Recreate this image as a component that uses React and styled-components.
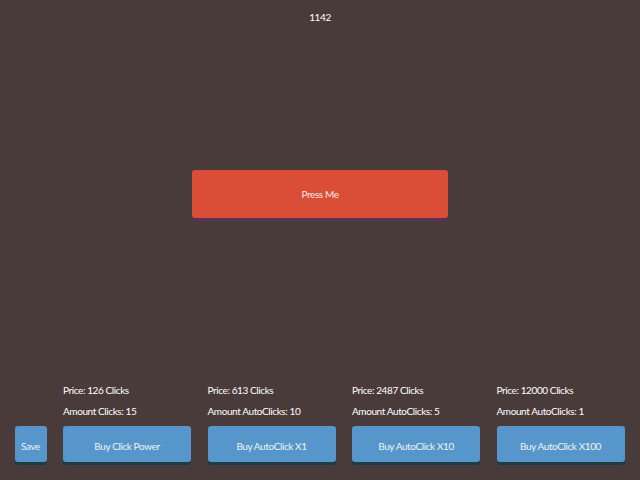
import React from "react";
import styled, { createGlobalStyle } from "styled-components";

const Global = createGlobalStyle`
  html, body { margin: 0; padding: 0; background: #4a3b3b; }
  body { font-family: Lato, "Open Sans", sans-serif; color: #ffffff; letter-spacing: -0.4px; }
  #root { height: 480px; }
`;

const Page = styled.div`
  height: 480px;
  display: flex;
  flex-direction: column;
  align-items: center;
`;

const Counter = styled.div`
  height: 34px;
  display: flex;
  align-items: center;
  font-size: 10px;
  color: #fff;
`;

const PressButton = styled.button`
  margin-top: 136px;
  width: 256px;
  height: 48px;
  border: none;
  border-radius: 3px;
  background: #da4e38;
  box-shadow: 0 3px 0 #5b3052;
  color: #f4ece8;
  font-family: inherit;
  letter-spacing: inherit;
  font-size: 10px;
  cursor: pointer;
`;

const Spacer = styled.div`
  flex: 1;
`;

const Footer = styled.div`
  align-self: stretch;
  display: flex;
  align-items: flex-end;
  gap: 16.5px;
  padding: 0 0 18px 14.5px;
`;

const Column = styled.div`
  display: flex;
  flex-direction: column;
`;

const Label = styled.div`
  font-size: 10px;
  height: 21px;
  line-height: 21px;
  color: #fff;
`;

const Labels = styled.div`
  display: flex;
  flex-direction: column;
  margin-bottom: 4px;
`;

const ShopButton = styled.button`
  width: ${(p) => p.$w}px;
  height: 36px;
  border: none;
  border-radius: 3px;
  background: #5796cb;
  box-shadow: 0 3px 0 #1f3c46;
  color: #eef3f7;
  font-family: inherit;
  letter-spacing: inherit;
  font-size: 10px;
  padding: 3px 0 0;
  cursor: pointer;
`;

const shop = [
  { price: 126, amount: "Amount Clicks: 15", label: "Buy Click Power" },
  { price: 613, amount: "Amount AutoClicks: 10", label: "Buy AutoClick X1" },
  { price: 2487, amount: "Amount AutoClicks: 5", label: "Buy AutoClick X10" },
  { price: 12000, amount: "Amount AutoClicks: 1", label: "Buy AutoClick X100" },
];

export default function App() {
  return (
    <>
      <Global />
      <Page>
        <Counter>1142</Counter>
        <PressButton>Press Me</PressButton>
        <Spacer />
        <Footer>
          <ShopButton $w={32}>Save</ShopButton>
          {shop.map((s) => (
            <Column key={s.label}>
              <Labels>
                <Label>Price: {s.price} Clicks</Label>
                <Label>{s.amount}</Label>
              </Labels>
              <ShopButton $w={128}>{s.label}</ShopButton>
            </Column>
          ))}
        </Footer>
      </Page>
    </>
  );
}
